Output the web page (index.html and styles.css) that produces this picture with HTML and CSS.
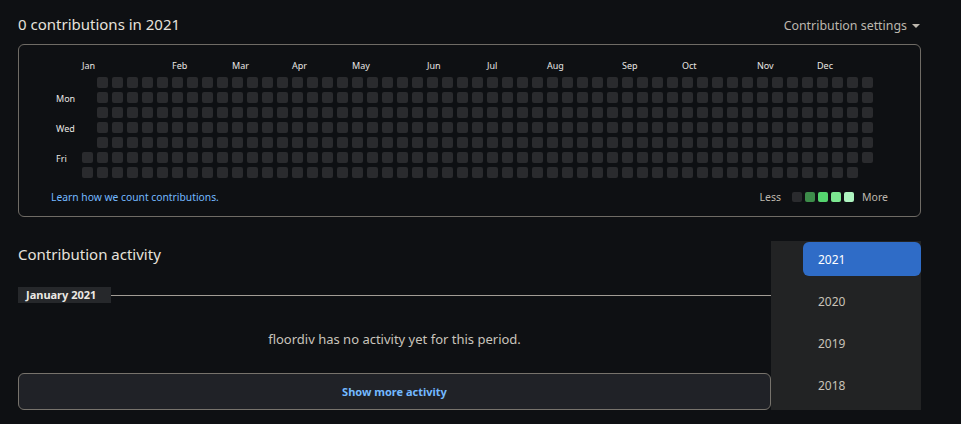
FILE: index.html
```html
<!DOCTYPE html>
<html lang="en">
<head>
<meta charset="utf-8">
<title>Contributions</title>
<link rel="stylesheet" href="styles.css">
</head>
<body>
<div class="page">
  <div class="header">
    <h2 class="title">0 contributions in 2021</h2>
    <div class="settings">Contribution settings <span class="caret"></span></div>
  </div>

  <div class="cal-box">
    <div class="cal">
      <div class="corner"></div>
      <div class="months">
        <span style="grid-column:1">Jan</span>
        <span style="grid-column:7">Feb</span>
        <span style="grid-column:11">Mar</span>
        <span style="grid-column:15">Apr</span>
        <span style="grid-column:19">May</span>
        <span style="grid-column:24">Jun</span>
        <span style="grid-column:28">Jul</span>
        <span style="grid-column:32">Aug</span>
        <span style="grid-column:37">Sep</span>
        <span style="grid-column:41">Oct</span>
        <span style="grid-column:46">Nov</span>
        <span style="grid-column:50">Dec</span>
      </div>
      <div class="days">
        <span></span><span>Mon</span><span></span><span>Wed</span><span></span><span>Fri</span><span></span>
      </div>
      <div class="cells">
<i class="x"></i><i class="x"></i><i class="x"></i><i class="x"></i><i class="x"></i><i></i><i></i>
<i></i><i></i><i></i><i></i><i></i><i></i><i></i>
<i></i><i></i><i></i><i></i><i></i><i></i><i></i>
<i></i><i></i><i></i><i></i><i></i><i></i><i></i>
<i></i><i></i><i></i><i></i><i></i><i></i><i></i>
<i></i><i></i><i></i><i></i><i></i><i></i><i></i>
<i></i><i></i><i></i><i></i><i></i><i></i><i></i>
<i></i><i></i><i></i><i></i><i></i><i></i><i></i>
<i></i><i></i><i></i><i></i><i></i><i></i><i></i>
<i></i><i></i><i></i><i></i><i></i><i></i><i></i>
<i></i><i></i><i></i><i></i><i></i><i></i><i></i>
<i></i><i></i><i></i><i></i><i></i><i></i><i></i>
<i></i><i></i><i></i><i></i><i></i><i></i><i></i>
<i></i><i></i><i></i><i></i><i></i><i></i><i></i>
<i></i><i></i><i></i><i></i><i></i><i></i><i></i>
<i></i><i></i><i></i><i></i><i></i><i></i><i></i>
<i></i><i></i><i></i><i></i><i></i><i></i><i></i>
<i></i><i></i><i></i><i></i><i></i><i></i><i></i>
<i></i><i></i><i></i><i></i><i></i><i></i><i></i>
<i></i><i></i><i></i><i></i><i></i><i></i><i></i>
<i></i><i></i><i></i><i></i><i></i><i></i><i></i>
<i></i><i></i><i></i><i></i><i></i><i></i><i></i>
<i></i><i></i><i></i><i></i><i></i><i></i><i></i>
<i></i><i></i><i></i><i></i><i></i><i></i><i></i>
<i></i><i></i><i></i><i></i><i></i><i></i><i></i>
<i></i><i></i><i></i><i></i><i></i><i></i><i></i>
<i></i><i></i><i></i><i></i><i></i><i></i><i></i>
<i></i><i></i><i></i><i></i><i></i><i></i><i></i>
<i></i><i></i><i></i><i></i><i></i><i></i><i></i>
<i></i><i></i><i></i><i></i><i></i><i></i><i></i>
<i></i><i></i><i></i><i></i><i></i><i></i><i></i>
<i></i><i></i><i></i><i></i><i></i><i></i><i></i>
<i></i><i></i><i></i><i></i><i></i><i></i><i></i>
<i></i><i></i><i></i><i></i><i></i><i></i><i></i>
<i></i><i></i><i></i><i></i><i></i><i></i><i></i>
<i></i><i></i><i></i><i></i><i></i><i></i><i></i>
<i></i><i></i><i></i><i></i><i></i><i></i><i></i>
<i></i><i></i><i></i><i></i><i></i><i></i><i></i>
<i></i><i></i><i></i><i></i><i></i><i></i><i></i>
<i></i><i></i><i></i><i></i><i></i><i></i><i></i>
<i></i><i></i><i></i><i></i><i></i><i></i><i></i>
<i></i><i></i><i></i><i></i><i></i><i></i><i></i>
<i></i><i></i><i></i><i></i><i></i><i></i><i></i>
<i></i><i></i><i></i><i></i><i></i><i></i><i></i>
<i></i><i></i><i></i><i></i><i></i><i></i><i></i>
<i></i><i></i><i></i><i></i><i></i><i></i><i></i>
<i></i><i></i><i></i><i></i><i></i><i></i><i></i>
<i></i><i></i><i></i><i></i><i></i><i></i><i></i>
<i></i><i></i><i></i><i></i><i></i><i></i><i></i>
<i></i><i></i><i></i><i></i><i></i><i></i><i></i>
<i></i><i></i><i></i><i></i><i></i><i></i><i></i>
<i></i><i></i><i></i><i></i><i></i><i></i><i></i>
<i></i><i></i><i></i><i></i><i></i><i></i>
      </div>
    </div>
    <div class="cal-foot">
      <a class="learn" href="#">Learn how we count contributions.</a>
      <div class="legend">
        <span class="lg-text">Less</span>
        <span class="sq l0"></span><span class="sq l1"></span><span class="sq l2"></span><span class="sq l3"></span><span class="sq l4"></span>
        <span class="lg-text">More</span>
      </div>
    </div>
  </div>

  <div class="activity">
    <div class="act-main">
      <h2 class="act-title">Contribution activity</h2>
      <div class="month-divider">
        <span class="month-tag">January 2021</span>
        <span class="month-line"></span>
      </div>
      <p class="empty">floordiv has no activity yet for this period.</p>
      <button class="more-btn" type="button">Show more activity</button>
    </div>
    <ul class="years">
      <li class="year selected">2021</li>
      <li class="year">2020</li>
      <li class="year">2019</li>
      <li class="year">2018</li>
    </ul>
  </div>
</div>
</body>
</html>
```

FILE: styles.css
```css
html, body {
  margin: 0;
  padding: 0;
  background: #0e1013;
}
body {
  font-family: "Noto Sans", "Open Sans", sans-serif;
  color: #e2ded8;
}
.page {
  width: 903px;
  margin-left: 18px;
}
.header {
  display: flex;
  justify-content: space-between;
  align-items: center;
  height: 24px;
  margin-top: 12px;
  margin-bottom: 8px;
}
.title {
  margin: 0;
  font-size: 15px;
  font-weight: 400;
  color: #e6e2dc;
}
.settings {
  font-size: 12.4px;
  color: #bdb7ae;
  display: flex;
  align-items: center;
  gap: 5px;
  padding-top: 3px;
  padding-right: 1px;
}
.caret {
  width: 0;
  height: 0;
  border-left: 4px solid transparent;
  border-right: 4px solid transparent;
  border-top: 4px solid #bdb7ae;
}
.cal-box {
  border: 1px solid #6f6b65;
  border-radius: 6px;
  padding: 13px 0 9px 0;
}
.cal {
  display: grid;
  grid-template-columns: 26px auto;
  grid-template-rows: 15px auto;
  row-gap: 4px;
  padding-left: 37px;
}
.months {
  display: grid;
  grid-template-columns: repeat(53, 11px);
  column-gap: 4px;
  font-size: 9px;
  line-height: 15px;
  color: #e8e6e3;
}
.months span {
  grid-row: 1;
  white-space: nowrap;
}
.days {
  display: grid;
  grid-template-rows: repeat(7, 11px);
  row-gap: 4px;
  font-size: 9px;
  line-height: 13px;
  color: #e8e6e3;
}
.cells {
  display: grid;
  grid-template-rows: repeat(7, 11px);
  grid-auto-columns: 11px;
  grid-auto-flow: column;
  gap: 4px;
}
.cells i {
  display: block;
  width: 11px;
  height: 11px;
  border-radius: 2px;
  background: #2a2b2e;
}
.cells i.x {
  background: transparent;
}
.cal-foot {
  display: flex;
  justify-content: space-between;
  align-items: center;
  height: 20px;
  margin-top: 9px;
  padding: 0 32px;
}
.learn {
  font-size: 10.3px;
  color: #73b9ff;
  text-decoration: none;
}
.legend {
  display: flex;
  align-items: center;
  gap: 3px;
  font-size: 10.5px;
  color: #bdb7ae;
}
.lg-text {
  margin: 0 8px 0 0;
}
.lg-text:last-child {
  margin: 0 0 0 5px;
}
.sq {
  width: 10px;
  height: 10px;
  border-radius: 2px;
}
.l0 { background: #2a2b2e; }
.l1 { background: #3d8c4a; }
.l2 { background: #55d56f; }
.l3 { background: #7ce891; }
.l4 { background: #aef4c0; }

.activity {
  display: flex;
  margin-top: 24px;
}
.act-main {
  width: 753px;
}
.act-title {
  margin: 0;
  font-size: 15px;
  font-weight: 400;
  line-height: 26px;
  color: #e6e2dc;
}
.month-divider {
  display: flex;
  align-items: center;
  margin-top: 20px;
  height: 16px;
}
.month-tag {
  background: #26282b;
  font-size: 11px;
  font-weight: 700;
  color: #ece9e4;
  line-height: 16px;
  padding: 0 8px 0 8px;
  width: 77px;
}
.month-line {
  flex: 1;
  height: 1px;
  background: #a19c95;
}
.empty {
  margin: 26px 0 0 0;
  line-height: 20px;
  font-size: 13px;
  text-align: center;
  color: #c9c4bc;
}
.more-btn {
  display: block;
  width: 753px;
  height: 37px;
  margin-top: 24px;
  background: #202227;
  border: 1px solid #77736c;
  border-radius: 6px;
  font-family: inherit;
  font-size: 11px;
  font-weight: 700;
  color: #73b9ff;
}
.years {
  list-style: none;
  margin: 0;
  width: 150px;
  height: 169px;
  box-sizing: border-box;
  padding: 1px 0 8px 32px;
  background: #222324;
  display: flex;
  flex-direction: column;
  gap: 8px;
}
.year {
  height: 34px;
  line-height: 35px;
  padding-left: 15px;
  font-size: 12px;
  color: #c8c2b8;
  border-radius: 6px;
}
.year.selected {
  background: #2f6cc7;
  color: #ffffff;
}
```
